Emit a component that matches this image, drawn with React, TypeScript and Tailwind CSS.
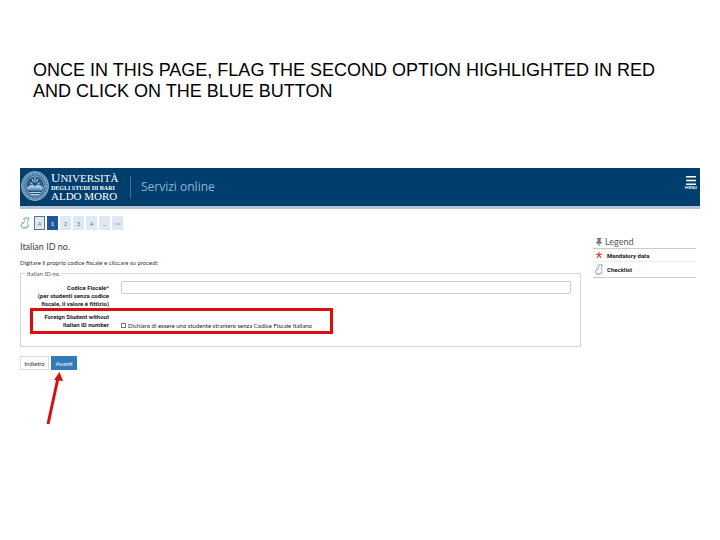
import { useState } from "react";

const STEPS = ["A", "1", "2", "3", "4", "...", ">>"];

function ChecklistIcon({ className }: { className: string }) {
  return (
    <svg viewBox="0 0 20 24" className={className} fill="none" stroke="#4d86a8" strokeWidth="1.6">
      <path d="M10 2h7l-1 5M10 2c-3 0-3 3-2 4M6 11c-4 3-5 7-3 9 2 3 8 3 11 1 3-1 4-4 2-6" />
      <path d="M16 7l-1 8M3 10l4 3 3-8" stroke="#6f9fbb" />
      <path d="M5 20c3 1 7 1 9-2" stroke="#8fb5cc" />
    </svg>
  );
}

function Seal() {
  return (
    <svg viewBox="0 0 56 60" className="h-[30px] w-7 shrink-0" fill="none" stroke="#b9d2e5">
      <ellipse cx="28" cy="30" rx="27" ry="29" fill="#3f7099" strokeWidth="1.5" />
      <ellipse cx="28" cy="30" rx="23" ry="25" strokeWidth="4" strokeDasharray="2 2" stroke="#9dbdd6" />
      <ellipse cx="28" cy="30" rx="18" ry="20" fill="#1f5482" strokeWidth="1.2" />
      <path d="M28 12v10M22 15l3 8M34 15l-3 8M17 23l6 3M39 23l-6 3" strokeWidth="2" />
      <path d="M13 33c6-7 11-6 15-2 4-4 9-5 15 1l-2 6H15z" fill="#a9c6dc" strokeWidth="1" />
      <path d="M17 43h22M20 47h16" strokeWidth="2" />
      <path d="M16 36h23" stroke="#1f5482" strokeWidth="1.5" />
    </svg>
  );
}

function Header() {
  return (
    <header className="flex h-[41px] items-start border-b-[3px] border-[#b3c4d9] bg-[#003e6e] text-white">
      <div className="flex gap-0.5 pt-[3px] pl-px">
        <Seal />
        <div className="w-[66px] pt-px font-['Liberation_Serif',serif] whitespace-nowrap">
          <div className="text-[13px] leading-[11px]">U<span className="text-[11px]">NIVERSITÀ</span></div>
          <div className="text-[6px] leading-[8px] font-bold">DEGLI STUDI DI BARI</div>
          <div className="text-[11px] leading-[9px]">ALDO MORO</div>
        </div>
      </div>
      <div className="mt-2 ml-[13px] flex h-[22px] items-center border-l border-[#44739a] pl-2.5 font-['Open_Sans',sans-serif] text-[12px] text-[#8fb4d3]">
        Servizi online
      </div>
      <button className="mt-2 mr-[3px] ml-auto flex flex-col items-center">
        <svg viewBox="0 0 10 9" className="h-[9px] w-2.5" stroke="#fff" strokeWidth="1.4">
          <path d="M0 .7h10M0 4.500h10M0 8.300h10" />
        </svg>
        <span className="mt-px text-[4px] leading-[4px] font-bold">MENU</span>
      </button>
    </header>
  );
}

function Steps() {
  return (
    <nav className="mt-[7px] flex items-center gap-0.5 text-[6px]">
      <ChecklistIcon className="mr-0.5 h-3 w-2.5" />
      {STEPS.map((step) => (
        <a
          key={step}
          href="#"
          className={`flex h-3.5 w-[11px] items-center justify-center
            ${step === "1" ? "bg-[#20569a] text-white" : step === "A" ? "border border-[#5b7591] bg-[#dfe9f4] text-[#5480a8]" : "bg-[#dfe9f4] text-[#5480a8]"}`}
        >
          {step}
        </a>
      ))}
    </nav>
  );
}

function Legend() {
  return (
    <aside className="mt-[26px] w-[103px] shrink-0 self-start font-['Roboto',sans-serif] text-[6px] text-[#222]">
      <h2 className="flex items-center gap-[3px] border-b border-[#ccc] pl-[3px] font-['Lato',sans-serif] text-[9px] leading-[13px] text-[#555]">
        <svg viewBox="0 0 12 16" className="h-2 w-1.5 shrink-0" fill="#777">
          <path d="M1 0h10v2H9v5l3 2v2H7v5H5v-5H0V9l3-2V2H1z" />
        </svg>
        Legend
      </h2>
      <div className="flex h-[13px] items-center gap-1 border-b border-[#eee] font-bold">
        <svg viewBox="0 0 12 12" className="ml-0.5 h-1.5 w-2" stroke="#d9402f" strokeWidth="2.2">
          <path d="M6 0v6M0 4l6 2 6-2M2 12l4-6 4 6" fill="none" />
        </svg>
        Mandatory data
      </div>
      <div className="flex h-4 items-center gap-[3px] border-b border-[#ccc] font-bold">
        <ChecklistIcon className="ml-px h-[11px] w-2.5" />
        Checklist
      </div>
    </aside>
  );
}

function IdForm() {
  const [foreign, setForeign] = useState(false);

  return (
    <form className="text-[6px] text-[#222]" onSubmit={(e) => e.preventDefault()}>
      <fieldset className="h-[77px] border border-[#d5d5d5] pr-[9px]">
        <legend className="ml-1 px-0.5 text-[6px] leading-[7px] text-[#555]">Italian ID no.</legend>
        <div className="mt-1 flex items-start gap-3">
          <label htmlFor="codice" className="w-[88px] shrink-0 pt-[3px] text-right font-['Roboto',sans-serif] leading-2 font-bold">
            Codice Fiscale*<br />
            (per studenti senza codice<br />
            fiscale, il valore è fittizio)
          </label>
          <input id="codice" className="h-[13px] min-w-0 flex-1 rounded-xs border border-[#ccc] px-1 outline-none" />
        </div>
        <div className="relative mt-[5px] flex items-end gap-3">
          <label htmlFor="foreign" className="w-[88px] shrink-0 text-right font-['Roboto',sans-serif] leading-2 font-bold">
            Foreign Student without<br />
            Italian ID number
          </label>
          <label className="flex h-2 items-center gap-0.5 whitespace-nowrap">
            <input
              id="foreign"
              type="checkbox"
              checked={foreign}
              onChange={(e) => setForeign(e.target.checked)}
              className="size-[5px] appearance-none border border-[#777] checked:bg-[#337ab7]"
            />
            Dichiaro di essere uno studente straniero senza Codice Fiscale italiano
          </label>
          <div className="pointer-events-none absolute -top-[5px] left-[9px] h-[26px] w-[303px] border-[3px] border-[#d80f0f]" />
        </div>
      </fieldset>
      <div className="relative mt-[9px] flex gap-0.5">
        <button type="button" className="h-3.5 w-[29px] border border-[#ddd] text-center text-[#333]">Indietro</button>
        <button type="submit" className="h-3.5 w-[26px] bg-[#337ab7] text-center text-white">Avanti</button>
        <svg viewBox="0 0 20 54" className="pointer-events-none absolute top-4 left-[26px] h-[54px] w-5">
          <path d="M2 52L12 6" stroke="#d80f0f" strokeWidth="3" />
          <path d="M13.500 0L17 9L8 8z" fill="#d80f0f" />
        </svg>
      </div>
    </form>
  );
}

export default function App() {
  return (
    <main className="min-h-screen bg-white px-5 pt-[60px] font-['Lato',sans-serif]">
      <h1 className="mx-[13px] font-['Liberation_Sans',sans-serif] text-[18px] leading-[21px] text-black">
        ONCE IN THIS PAGE, FLAG THE SECOND OPTION HIGHLIGHTED IN RED<br />
        AND CLICK ON THE BLUE BUTTON
      </h1>
      <section className="mt-[66px]">
        <Header />
        <div className="flex gap-3 pr-1">
          <div className="min-w-0 flex-1">
            <Steps />
            <h2 className="mt-[11px] text-[9px] leading-3 text-[#444]">Italian ID no.</h2>
            <p className="mt-[5px] mb-0.5 text-[6px] leading-[10px] text-[#333]">
              Digitare il proprio codice fiscale e cliccare su procedi:
            </p>
            <IdForm />
          </div>
          <Legend />
        </div>
      </section>
    </main>
  );
}
